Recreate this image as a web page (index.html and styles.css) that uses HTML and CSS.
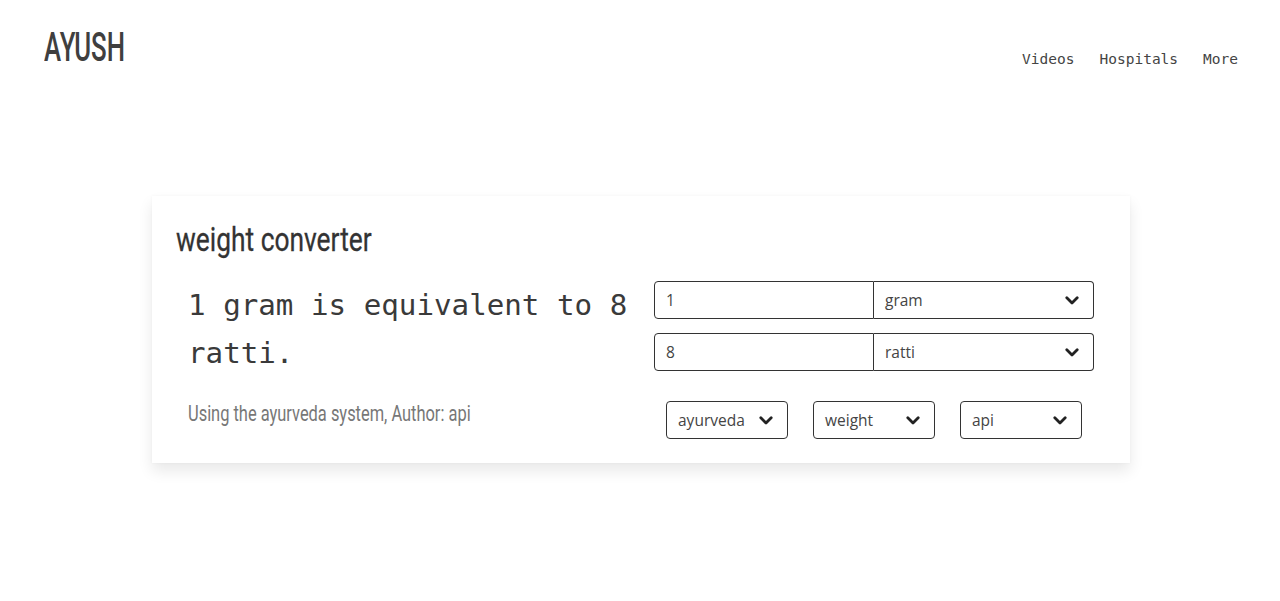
FILE: index.html
```html
<!DOCTYPE html>
<html lang="en">
<head>
<meta charset="utf-8">
<title>AYUSH - weight converter</title>
<link rel="stylesheet" href="styles.css">
</head>
<body>
<header class="topbar">
  <div class="brand"><span class="narrow">AYUSH</span></div>
  <nav class="nav">
    <a href="#">Videos</a>
    <a href="#">Hospitals</a>
    <a href="#">More</a>
  </nav>
</header>
<main class="main">
  <section class="card">
    <h1 class="card-title"><span class="narrow">weight converter</span></h1>
    <div class="grid">
      <p class="result">1 gram is equivalent to 8 ratti.</p>
      <div class="pairs">
        <div class="pair">
          <div class="field">1</div>
          <div class="field select">gram
            <svg class="chev" viewBox="0 0 14 9"><path d="M1.8 1.8 L7 7 L12.2 1.8"/></svg>
          </div>
        </div>
        <div class="pair">
          <div class="field">8</div>
          <div class="field select">ratti
            <svg class="chev" viewBox="0 0 14 9"><path d="M1.8 1.8 L7 7 L12.2 1.8"/></svg>
          </div>
        </div>
      </div>
      <p class="author"><span class="narrow">Using the ayurveda system, Author: api</span></p>
      <div class="filters">
        <div class="small-select">ayurveda<svg class="chev" viewBox="0 0 14 9"><path d="M1.8 1.8 L7 7 L12.2 1.8"/></svg></div>
        <div class="small-select">weight<svg class="chev" viewBox="0 0 14 9"><path d="M1.8 1.8 L7 7 L12.2 1.8"/></svg></div>
        <div class="small-select">api<svg class="chev" viewBox="0 0 14 9"><path d="M1.8 1.8 L7 7 L12.2 1.8"/></svg></div>
      </div>
    </div>
  </section>
</main>
</body>
</html>
```

FILE: styles.css
```css
* { box-sizing: border-box; }
html, body { margin: 0; padding: 0; background: #fff; }
body {
  font-family: "Open Sans", "Noto Sans", sans-serif;
  color: #333;
  width: 1280px;
  height: 601px;
  overflow: hidden;
}
.narrow {
  display: inline-block;
  white-space: nowrap;
  transform-origin: left center;
}
.topbar {
  display: flex;
  justify-content: space-between;
  align-items: flex-start;
  padding: 24px 42px 0 44px;
  height: 196px;
}
.brand {
  font-family: Roboto, "Liberation Sans", sans-serif;
  font-size: 40px;
  font-weight: 500;
  color: #3f3f3f;
  line-height: 48px;
}
.brand .narrow { transform: scaleX(0.645); }
.nav {
  display: flex;
  gap: 25px;
  padding-top: 25px;
}
.nav a {
  font-family: "DejaVu Sans Mono", "Liberation Mono", monospace;
  font-size: 14.5px;
  color: #444;
  text-decoration: none;
  line-height: 20px;
}
.main {
  display: flex;
  justify-content: center;
  padding-left: 2px;
}
.card {
  width: 978px;
  background: #fff;
  box-shadow: 0 8px 14px rgba(0,0,0,0.09), 0 0 3px rgba(0,0,0,0.04);
  padding: 24px 36px 24px 24px;
}
.card-title {
  margin: 0;
  font-family: Roboto, "Liberation Sans", sans-serif;
  font-weight: normal;
  font-size: 34px;
  line-height: 38px;
  color: #333;
  -webkit-text-stroke: 0.3px #333;
}
.card-title .narrow { transform: scaleX(0.775); }
.grid {
  margin-top: 23px;
  display: grid;
  grid-template-columns: 478px 440px;
  row-gap: 24px;
}
.result {
  margin: 0;
  padding-left: 12px;
  font-family: "DejaVu Sans Mono", "Liberation Mono", monospace;
  font-size: 29.2px;
  line-height: 48px;
  color: #3a3a3a;
}
.pairs {
  display: flex;
  flex-direction: column;
  gap: 14px;
}
.pair {
  display: flex;
}
.field {
  width: 220px;
  height: 38px;
  border: 1px solid #333;
  border-radius: 4px 0 0 4px;
  padding: 0 11px;
  display: flex;
  align-items: center;
  font-size: 15.5px;
  color: #444;
}
.field.select {
  border-left: none;
  border-radius: 0 4px 4px 0;
  justify-content: space-between;
  padding-right: 14px;
}
.chev {
  width: 14px;
  height: 9px;
  fill: none;
  stroke: #222;
  stroke-width: 2.8;
  stroke-linecap: round;
  stroke-linejoin: round;
}
.author {
  margin: 0;
  padding-left: 12px;
  font-family: Roboto, "Liberation Sans", sans-serif;
  font-size: 22.5px;
  line-height: 28px;
  color: #777;
  align-self: center;
  transform: translateY(-7px);
}
.author .narrow { transform: scaleX(0.73); }
.filters {
  display: flex;
  justify-content: space-between;
  padding: 0 12px;
}
.small-select {
  width: 122px;
  height: 38px;
  border: 1px solid #333;
  border-radius: 4px;
  padding: 0 14px 0 11px;
  display: flex;
  align-items: center;
  justify-content: space-between;
  font-size: 15.5px;
  color: #444;
}
```
